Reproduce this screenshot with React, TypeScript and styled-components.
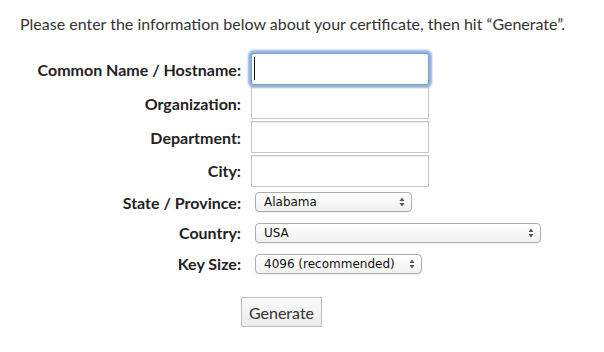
import React from "react";
import styled, { createGlobalStyle } from "styled-components";

const Global = createGlobalStyle`
  html, body { margin: 0; padding: 0; background: #fff; }
  body { font-family: Lato, "Open Sans", sans-serif; color: #333; }
`;

const Page = styled.div`
  padding: 14px 20px 0 20px;
`;

const Intro = styled.p`
  margin: 0 0 18px 0;
  font-size: 16px;
  line-height: 20px;
  color: #333;
`;

const Form = styled.form`
  width: 523px;
  display: flex;
  flex-direction: column;
`;

const Row = styled.div<{ $h: number }>`
  display: grid;
  grid-template-columns: 221px 1fr;
  column-gap: 10px;
  align-items: center;
  height: ${(p) => p.$h}px;
`;

const Label = styled.label`
  text-align: right;
  font-weight: 700;
  font-size: 16px;
  color: #222;
`;

const Field = styled.div`
  position: relative;
  display: flex;
  align-items: center;
`;

const TextInput = styled.input<{ $focused?: boolean }>`
  box-sizing: border-box;
  width: 178px;
  height: 32px;
  margin: 0;
  padding: 0 4px;
  border: 1px solid #c4c4c4;
  border-radius: ${(p) => (p.$focused ? "3px" : "0")};
  background: #fff;
  outline: none;
  font-size: 14px;
  box-shadow: ${(p) =>
    p.$focused ? "0 0 0 1px #8fb1dc, 0 0 2px 3px rgba(110,155,215,0.75)" : "inset 0 1px 0 #eee"};
  border-color: ${(p) => (p.$focused ? "#7ea2d3" : "#c4c4c4")};
`;

const Caret = styled.span`
  position: absolute;
  left: 3px;
  top: 4px;
  width: 1px;
  height: 23px;
  background: #111;
`;

const Select = styled.div<{ $w: number }>`
  box-sizing: border-box;
  position: relative;
  margin-left: 4px;
  width: ${(p) => p.$w}px;
  height: 20px;
  border: 1px solid #adadad;
  border-radius: 4px;
  background: linear-gradient(#ffffff, #f1f1f1);
  box-shadow: 0 1px 0 rgba(0, 0, 0, 0.05);
  font-family: "DejaVu Sans", sans-serif;
  font-size: 12px;
  line-height: 18px;
  color: #111;
  padding-left: 8px;
`;

const Arrows = styled.svg`
  position: absolute;
  right: 6px;
  top: 4px;
`;

const ButtonRow = styled.div`
  display: flex;
  justify-content: center;
  padding-top: 18px;
`;

const Button = styled.button`
  box-sizing: border-box;
  width: 81px;
  height: 30px;
  border: 1px solid #bdbdbd;
  border-radius: 0;
  background: linear-gradient(#fafafa, #ececec);
  font-family: Lato, "Open Sans", sans-serif;
  font-size: 16px;
  color: #333;
  padding: 0;
`;

function SelectBox({ value, width }: { value: string; width: number }) {
  return (
    <Select $w={width}>
      {value}
      <Arrows width="6" height="10" viewBox="0 0 6 10">
        <path d="M3 0.5 L5.5 4 L0.5 4 Z" fill="#555" />
        <path d="M3 9.5 L5.5 6 L0.5 6 Z" fill="#555" />
      </Arrows>
    </Select>
  );
}

export default function App() {
  return (
    <>
      <Global />
      <Page>
        <Intro>Please enter the information below about your certificate, then hit “Generate”.</Intro>
        <Form onSubmit={(e) => e.preventDefault()}>
          <Row $h={34}>
            <Label>Common Name / Hostname:</Label>
            <Field>
              <TextInput $focused readOnly />
              <Caret />
            </Field>
          </Row>
          <Row $h={34}>
            <Label>Organization:</Label>
            <Field>
              <TextInput />
            </Field>
          </Row>
          <Row $h={34}>
            <Label>Department:</Label>
            <Field>
              <TextInput />
            </Field>
          </Row>
          <Row $h={33}>
            <Label>City:</Label>
            <Field>
              <TextInput />
            </Field>
          </Row>
          <Row $h={30}>
            <Label>State / Province:</Label>
            <Field>
              <SelectBox value="Alabama" width={157} />
            </Field>
          </Row>
          <Row $h={31}>
            <Label>Country:</Label>
            <Field>
              <SelectBox value="USA" width={286} />
            </Field>
          </Row>
          <Row $h={31}>
            <Label>Key Size:</Label>
            <Field>
              <SelectBox value="4096 (recommended)" width={167} />
            </Field>
          </Row>
          <ButtonRow>
            <Button type="submit">Generate</Button>
          </ButtonRow>
        </Form>
      </Page>
    </>
  );
}
